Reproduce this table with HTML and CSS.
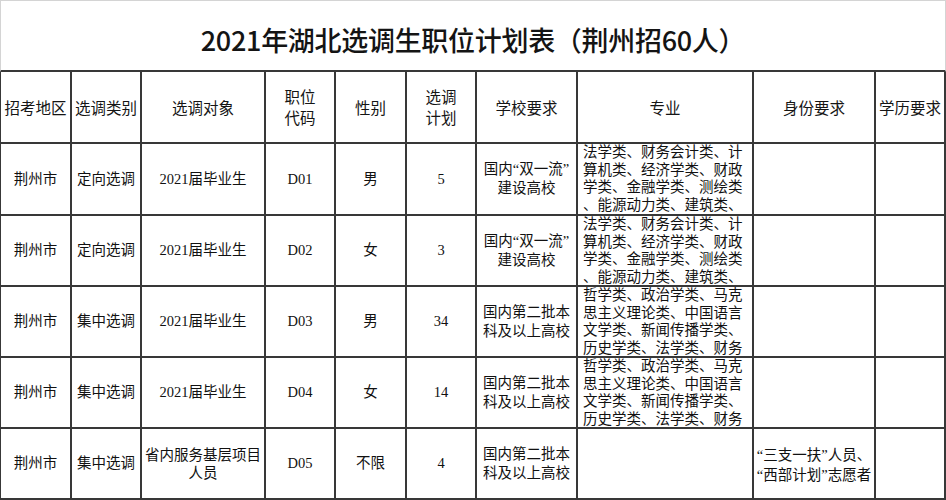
FILE: index.html
```html
<!DOCTYPE html>
<html lang="zh-CN">
<head>
<meta charset="utf-8">
<title>2021年湖北选调生职位计划表</title>
<link rel="stylesheet" href="styles.css">
</head>
<body>
<div class="sheet">
  <div class="title">2021年湖北选调生职位计划表（荆州招60人）</div>

  <div class="cell head first">招考地区</div>
  <div class="cell head">选调类别</div>
  <div class="cell head">选调对象</div>
  <div class="cell head">职位<br>代码</div>
  <div class="cell head">性别</div>
  <div class="cell head">选调<br>计划</div>
  <div class="cell head">学校要求</div>
  <div class="cell head">专业</div>
  <div class="cell head">身份要求</div>
  <div class="cell head">学历要求</div>

  <div class="cell first">荆州市</div>
  <div class="cell">定向选调</div>
  <div class="cell">2021届毕业生</div>
  <div class="cell">D01</div>
  <div class="cell">男</div>
  <div class="cell">5</div>
  <div class="cell school">国内“双一流”<br>建设高校</div>
  <div class="cell major">法学类、财务会计类、计<br>算机类、经济学类、财政<br>学类、金融学类、测绘类<br>、能源动力类、建筑类、</div>
  <div class="cell"></div>
  <div class="cell"></div>

  <div class="cell first">荆州市</div>
  <div class="cell">定向选调</div>
  <div class="cell">2021届毕业生</div>
  <div class="cell">D02</div>
  <div class="cell">女</div>
  <div class="cell">3</div>
  <div class="cell school">国内“双一流”<br>建设高校</div>
  <div class="cell major">法学类、财务会计类、计<br>算机类、经济学类、财政<br>学类、金融学类、测绘类<br>、能源动力类、建筑类、</div>
  <div class="cell"></div>
  <div class="cell"></div>

  <div class="cell first">荆州市</div>
  <div class="cell">集中选调</div>
  <div class="cell">2021届毕业生</div>
  <div class="cell">D03</div>
  <div class="cell">男</div>
  <div class="cell">34</div>
  <div class="cell school">国内第二批本<br>科及以上高校</div>
  <div class="cell major">哲学类、政治学类、马克<br>思主义理论类、中国语言<br>文学类、新闻传播学类、<br>历史学类、法学类、财务</div>
  <div class="cell"></div>
  <div class="cell"></div>

  <div class="cell first">荆州市</div>
  <div class="cell">集中选调</div>
  <div class="cell">2021届毕业生</div>
  <div class="cell">D04</div>
  <div class="cell">女</div>
  <div class="cell">14</div>
  <div class="cell school">国内第二批本<br>科及以上高校</div>
  <div class="cell major">哲学类、政治学类、马克<br>思主义理论类、中国语言<br>文学类、新闻传播学类、<br>历史学类、法学类、财务</div>
  <div class="cell"></div>
  <div class="cell"></div>

  <div class="cell first">荆州市</div>
  <div class="cell">集中选调</div>
  <div class="cell multi">省内服务基层项目<br>人员</div>
  <div class="cell">D05</div>
  <div class="cell">不限</div>
  <div class="cell">4</div>
  <div class="cell school">国内第二批本<br>科及以上高校</div>
  <div class="cell major"></div>
  <div class="cell identity">“三支一扶”人员、<br>“西部计划”志愿者</div>
  <div class="cell"></div>
</div>
</body>
</html>
```

FILE: styles.css
```css
* { box-sizing: border-box; }

html, body {
  margin: 0;
  padding: 0;
  background: #ffffff;
}

.sheet {
  width: 946px;
  height: 500px;
  display: grid;
  grid-template-columns: 72px 70px 124px 70px 71px 70px 101px 176px 122px 70px;
  grid-template-rows: 72px 72px 72px 71px 71px 71px 71px;
  font-family: "Liberation Serif", "Noto Sans CJK SC", serif;
  font-size: 14.5px;
  color: #111111;
  overflow: hidden;
}

.title {
  grid-column: 1 / -1;
  border-top: 1px solid #d4d4d4;
  border-left: 1px solid #d4d4d4;
  border-right: 1px solid #d4d4d4;
  border-bottom: 2px solid #383838;
  display: flex;
  align-items: center;
  justify-content: center;
  padding-top: 8px;
  font-family: "Noto Sans CJK SC", sans-serif;
  font-size: 27px;
  font-weight: 500;
  color: #141414;
  letter-spacing: -0.3px;
}

.cell {
  border-right: 2px solid #383838;
  border-bottom: 2px solid #383838;
  display: flex;
  align-items: center;
  justify-content: center;
  text-align: center;
  line-height: 19px;
  white-space: nowrap;
  overflow: hidden;
}

.first {
  border-left: 1px solid #383838;
}

.head {
  font-family: "Noto Sans CJK SC", sans-serif;
  font-size: 15.5px;
  line-height: 21px;
  color: #151515;
}

.school {
  line-height: 19px;
}

.multi {
  line-height: 18px;
}

.major {
  align-items: flex-start;
  justify-content: flex-start;
  text-align: left;
  padding-left: 5px;
  padding-top: 0;
  line-height: 17.5px;
}

.identity {
  line-height: 20px;
  padding-top: 2px;
}
```
